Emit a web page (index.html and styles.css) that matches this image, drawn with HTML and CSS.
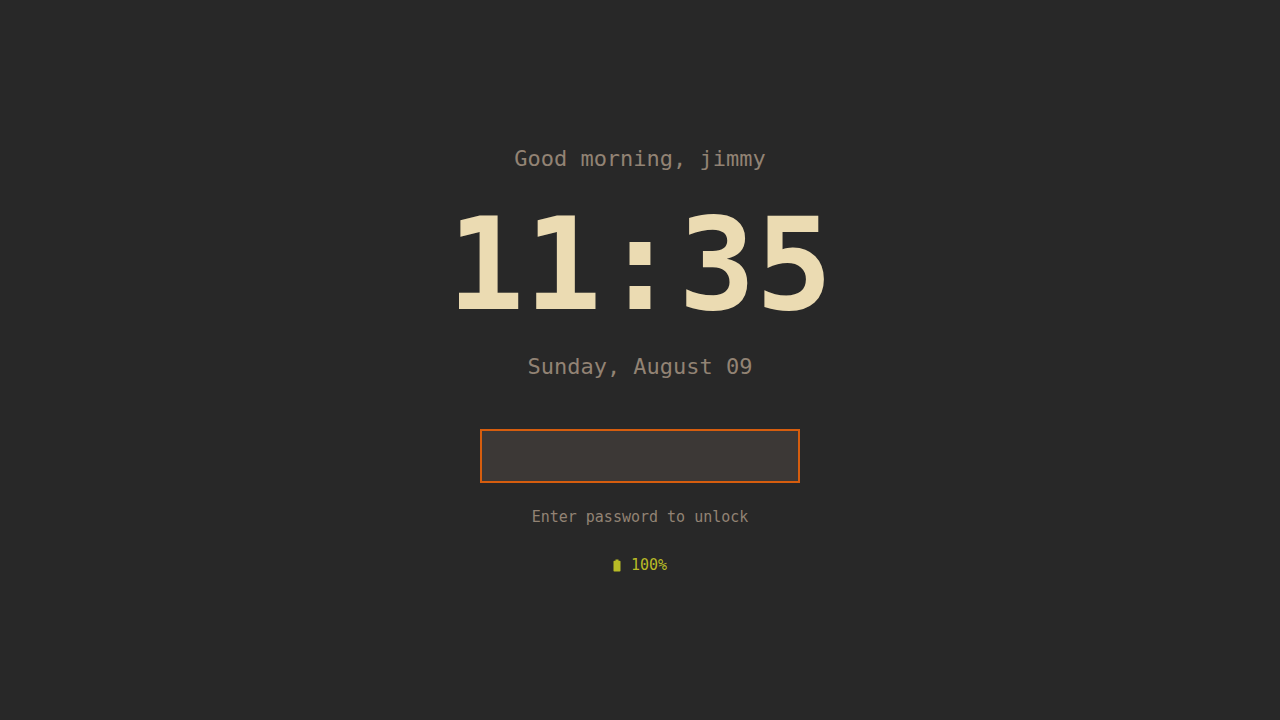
FILE: index.html
```html
<!DOCTYPE html>
<html lang="en">
<head>
    <meta charset="UTF-8">
    <meta name="viewport" content="width=device-width, initial-scale=1.0">
    <title>Lock Screen</title>
    <link rel="stylesheet" href="styles.css">
</head>
<body>
    <main class="lock-screen">
        <p class="greeting">Good morning, jimmy</p>
        <time class="clock" datetime="11:35">11:35</time>
        <p class="date">Sunday, August 09</p>

        <form class="unlock-form">
            <input class="password" id="password" type="password" autocomplete="off">
            <label class="hint" for="password">Enter password to unlock</label>
        </form>

        <div class="battery">
            <svg class="battery-icon" viewBox="0 0 8 13" aria-hidden="true">
                <path d="M2.5 0.5h3v1.2h1.2Q7.5 1.7 7.5 2.5v9.2Q7.5 12.5 6.7 12.5H1.3Q0.5 12.5 0.5 11.7V2.5Q0.5 1.7 1.3 1.7h1.2z"/>
            </svg>
            <span>100%</span>
        </div>
    </main>
</body>
</html>
```
FILE: styles.css
```css
* {
    margin: 0;
    padding: 0;
    box-sizing: border-box;
}

body {
    font-family: 'DejaVu Sans Mono', 'Liberation Mono', monospace;
    background: #282828;
    color: #928374;
}

.lock-screen {
    min-height: 100vh;
    display: flex;
    flex-direction: column;
    align-items: center;
    justify-content: center;
}

.greeting,
.date {
    font-size: 22px;
    line-height: 28px;
}

.clock {
    margin: 28px 0 24px;
    font-size: 128px;
    font-weight: bold;
    line-height: 128px;
    color: #ebdbb2;
}

.unlock-form {
    width: 100%;
    margin-top: 48px;
    display: flex;
    flex-direction: column;
    align-items: center;
    gap: 24px;
}

.password {
    width: 100%;
    max-width: 320px;
    height: 54px;
    padding: 0 16px;
    border: 2px solid #d65d0e;
    background: #3c3836;
    color: #ebdbb2;
    font-family: inherit;
    font-size: 22px;
    text-align: center;
}

.password:focus {
    outline: none;
}

.hint,
.battery {
    font-size: 15px;
    line-height: 20px;
}

.battery {
    display: flex;
    align-items: center;
    gap: 10px;
    margin-top: 28px;
    color: #b8bb26;
}

.battery-icon {
    width: 8px;
    height: 13px;
    fill: currentColor;
}
```
